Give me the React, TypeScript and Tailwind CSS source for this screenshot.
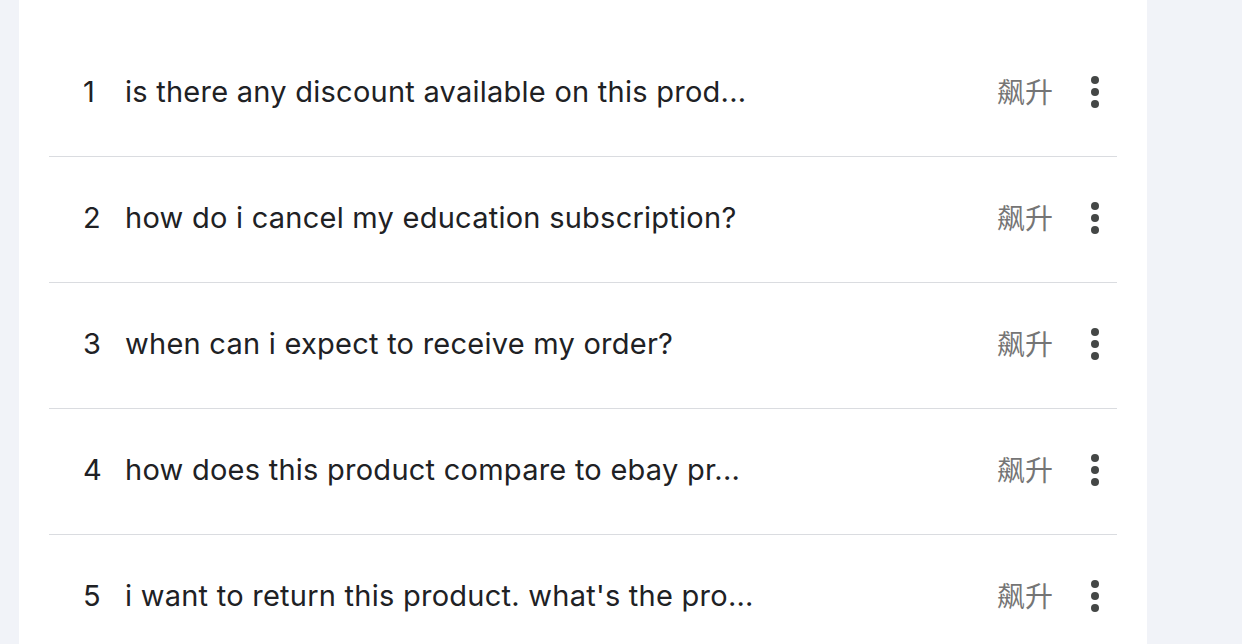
import React from "react";

const rows = [
  "is there any discount available on this prod...",
  "how do i cancel my education subscription?",
  "when can i expect to receive my order?",
  "how does this product compare to ebay pr...",
  "i want to return this product. what's the pro...",
];

function Dots() {
  return (
    <svg width="12" height="34" viewBox="0 0 12 34" className="block">
      <circle cx="6" cy="5" r="4" fill="#444746" />
      <circle cx="6" cy="17" r="4" fill="#444746" />
      <circle cx="6" cy="29" r="4" fill="#444746" />
    </svg>
  );
}

export default function App() {
  return (
    <div className="w-[1242px] h-[644px] overflow-hidden bg-[#f1f3f8]">
      <div className="ml-[19px] w-[1128px] h-full bg-white px-[30px] pt-[31px]">
        {rows.map((t, i) => (
          <div
            key={i}
            className="flex h-[126px] items-center border-b border-[#dadce0] text-[#202124]"
            style={{ fontFamily: "Inter, 'Noto Sans CJK SC', sans-serif" }}
          >
            <div className="w-[76px] pl-[34px] pb-[4px] text-[29px] leading-none">{i + 1}</div>
            <div className="flex-1 pb-[4px] text-[29px] tracking-[0.25px] leading-none whitespace-nowrap">{t}</div>
            <div
              className="text-[28px] leading-none text-[#757575] mr-[36px] pb-[5px]"
              style={{ fontFamily: "'Noto Sans CJK SC', sans-serif" }}
            >
              飙升
            </div>
            <div className="mr-[16px] pb-[4px]">
              <Dots />
            </div>
          </div>
        ))}
      </div>
    </div>
  );
}
